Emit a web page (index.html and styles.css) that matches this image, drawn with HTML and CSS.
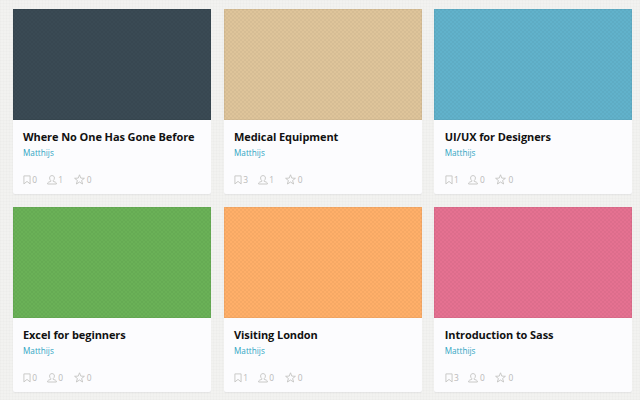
FILE: index.html
```
<!DOCTYPE html>
<html lang="en">
<head>
<meta charset="utf-8">
<title>Courses</title>
<link rel="stylesheet" href="styles.css">
</head>
<body>
<svg width="0" height="0" class="sprite" aria-hidden="true">
  <symbol id="bookmark" viewBox="0 0 8 10"><path d="M.9.9h6.200v8L4 6.400.9 8.900z"/></symbol>
  <symbol id="person" viewBox="0 0 10 10"><path d="M5 .6c-1.600 0-2.400 1-2.400 2.400 0 1.200.5 2 1.200 2.600v.7L1.500 7.200C.8 7.500.6 8 .6 9h8.800c0-1-.2-1.500-.9-1.800L6.200 6.300v-.7c.7-.6 1.200-1.400 1.200-2.600C7.400 1.600 6.600.6 5 .6z"/></symbol>
  <symbol id="star" viewBox="0 0 11 11"><path d="M5.500.8l1.300 3.300 3.600.2-2.800 2.200 1 3.500-3.100-2-3.100 2 1-3.500L.6 4.300l3.600-.2z"/></symbol>
</svg>
<main class="grid">
  <article class="card">
    <div class="cover navy"></div>
    <div class="body">
      <h2>Where No One Has Gone Before</h2>
      <a class="author">Matthijs</a>
      <div class="stats"><span class="marks"><svg><use href="#bookmark"/></svg>0</span><span class="people"><svg><use href="#person"/></svg>1</span><span class="stars"><svg><use href="#star"/></svg>0</span></div>
    </div>
  </article>
  <article class="card">
    <div class="cover sand"></div>
    <div class="body">
      <h2>Medical Equipment</h2>
      <a class="author">Matthijs</a>
      <div class="stats"><span class="marks"><svg><use href="#bookmark"/></svg>3</span><span class="people"><svg><use href="#person"/></svg>1</span><span class="stars"><svg><use href="#star"/></svg>0</span></div>
    </div>
  </article>
  <article class="card">
    <div class="cover blue"></div>
    <div class="body">
      <h2>UI/UX for Designers</h2>
      <a class="author">Matthijs</a>
      <div class="stats"><span class="marks"><svg><use href="#bookmark"/></svg>1</span><span class="people"><svg><use href="#person"/></svg>0</span><span class="stars"><svg><use href="#star"/></svg>0</span></div>
    </div>
  </article>
  <article class="card">
    <div class="cover green"></div>
    <div class="body">
      <h2>Excel for beginners</h2>
      <a class="author">Matthijs</a>
      <div class="stats"><span class="marks"><svg><use href="#bookmark"/></svg>0</span><span class="people"><svg><use href="#person"/></svg>0</span><span class="stars"><svg><use href="#star"/></svg>0</span></div>
    </div>
  </article>
  <article class="card">
    <div class="cover orange"></div>
    <div class="body">
      <h2>Visiting London</h2>
      <a class="author">Matthijs</a>
      <div class="stats"><span class="marks"><svg><use href="#bookmark"/></svg>1</span><span class="people"><svg><use href="#person"/></svg>0</span><span class="stars"><svg><use href="#star"/></svg>0</span></div>
    </div>
  </article>
  <article class="card">
    <div class="cover pink"></div>
    <div class="body">
      <h2>Introduction to Sass</h2>
      <a class="author">Matthijs</a>
      <div class="stats"><span class="marks"><svg><use href="#bookmark"/></svg>3</span><span class="people"><svg><use href="#person"/></svg>0</span><span class="stars"><svg><use href="#star"/></svg>0</span></div>
    </div>
  </article>
</main>
</body>
</html>
```
FILE: styles.css
```
* { box-sizing: border-box; }
body {
  margin: 0;
  height: 400px;
  overflow: hidden;
  background: #f2f2f0;
  background-image: repeating-linear-gradient(90deg, rgba(0,0,0,.01) 0 1px, transparent 1px 3px), repeating-linear-gradient(0deg, rgba(0,0,0,.01) 0 1px, transparent 1px 3px);
  font-family: "Open Sans", sans-serif;
}
.sprite { display: none; }
.grid {
  display: grid;
  grid-template-columns: 211px 210px 198px;
  grid-auto-rows: 185px;
  row-gap: 13px;
  padding: 9px 0 0 13px;
}
.card {
  width: 198px;
  background: #fcfcfe;
  border-radius: 0 0 2px 2px;
  box-shadow: 0 1px 1px rgba(40,40,60,.06);
}
.card:nth-child(3n) .body { padding-left: 10.700px; }
.cover {
  height: 111px;
  background-image: conic-gradient(rgba(0,0,0,.035) 25%, transparent 0 50%, rgba(0,0,0,.035) 0 75%, transparent 0);
  background-size: 4px 4px;
  box-shadow: inset 0 0 0 1px rgba(0,0,0,.04);
}
.navy { background-color: #3a4a54; }
.sand { background-color: #dec49a; }
.blue { background-color: #61b2cb; }
.green { background-color: #6ab157; }
.orange { background-color: #ffaf69; }
.pink { background-color: #e57191; }
.body { padding: 9px 10px 0; }
h2 {
  margin: 0;
  font-size: 11px;
  line-height: 16px;
  font-weight: 700;
  letter-spacing: -.085px;
  color: #111;
  white-space: nowrap;
}
.author {
  display: block;
  font-size: 8.200px;
  line-height: 12px;
  margin-top: 1.600px;
  color: #2fa5c3;
}
.stats {
  display: flex;
  margin-top: 15.400px;
  height: 12px;
  font-size: 8.400px;
  line-height: 12px;
  color: #b9b9b9;
}
.stats span { display: flex; align-items: center; }
.stats svg { fill: none; stroke: #c4c4c2; stroke-width: .9; flex: none; }
.marks { width: 23.500px; }
.marks svg { width: 8px; height: 10px; margin-right: 1.200px; }
.people { width: 27px; }
.people svg { width: 10px; height: 10px; margin-right: 1.700px; }
.stars svg { width: 11px; height: 11px; margin-right: 2.200px; }
```
